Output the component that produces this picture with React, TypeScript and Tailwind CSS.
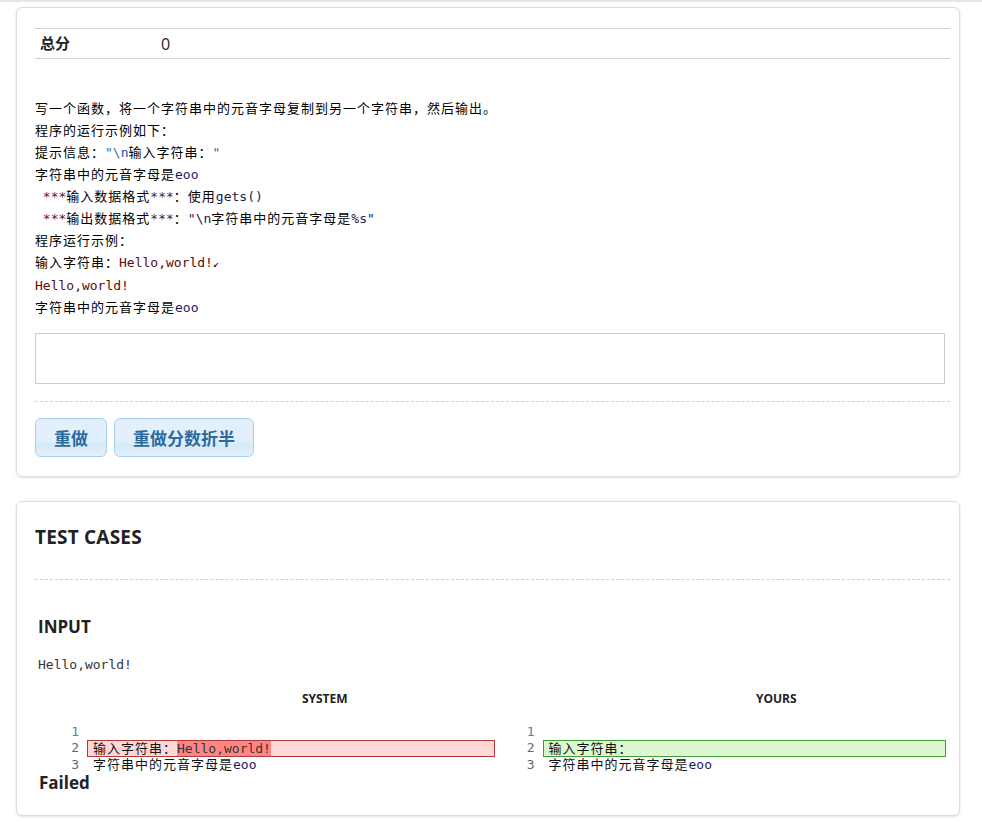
const CODE =
  "font-['DejaVu_Sans_Mono','Liberation_Mono','Noto_Sans_CJK_SC',monospace] text-[13px] tracking-[1px]";

function A({ c, children }: { c?: string; children: React.ReactNode }) {
  return (
    <span className={"tracking-normal " + (c ?? "")}>{children}</span>
  );
}

function DiffColumn({
  title,
  kind,
}: {
  title: string;
  kind: "system" | "yours";
}) {
  const isSys = kind === "system";
  return (
    <div className="flex flex-col">
      <div
        className={
          "text-center text-[12px] font-bold text-[#222] font-['Open_Sans',sans-serif] h-[20px] leading-[20px] " +
          (isSys ? "pl-[122px]" : "pl-[110px]")
        }
      >
        {title}
      </div>
      <div className={"mt-[15px] " + CODE}>
        {[1, 2, 3].map((n) => (
          <div key={n} className="flex">
            <div
              className={
                "text-right tracking-normal leading-[16px] " +
                (isSys ? "w-[44px] " : "w-[42px] ") +
                (n === 1 ? "text-[#5f7f9f]" : "text-[#666]")
              }
            >
              {n}
            </div>
            <div
              className={
                "ml-[8px] flex-1 text-[#111] " +
                (isSys ? "mr-[-2px] " : "mr-[4px] ") +
                (n === 2
                  ? isSys
                    ? "pl-[5px] h-[17px] leading-[15px] border border-[#b03a3a] bg-[#ffd7d7]"
                    : "pl-[5px] h-[17px] leading-[15px] border border-[#3a9f3a] bg-[#ddf8cf]"
                  : "pl-[6px] h-[16px] leading-[16px]")
              }
            >
              {n === 2 && (
                <>
                  输入字符串：
                  {isSys && (
                    <span className="tracking-normal bg-[#ff8585] text-[#333]">
                      Hello,world!
                    </span>
                  )}
                </>
              )}
              {n === 3 && (
                <>
                  字符串中的元音字母是<A c="text-[#1a1a5a]">eoo</A>
                </>
              )}
            </div>
          </div>
        ))}
      </div>
    </div>
  );
}

export default function App() {
  return (
    <div className="min-h-screen bg-white font-['Open_Sans','Noto_Sans_CJK_SC',sans-serif]">
      <div className="h-[2px] bg-[#e6e6e6]" />
      <div className="pl-[16px] pr-[22px] pt-[5px] pb-[12px] flex flex-col gap-[24px]">
        {/* question card */}
        <div className="rounded-[6px] border border-[#dcdcdc] shadow-[0_1px_3px_rgba(0,0,0,0.12)] pl-[18px] pr-[9px] pt-[20px] pb-[19px]">
          <div className="border-t border-b border-[#d0d0d0] h-[31px] flex items-center">
            <div className="w-[126px] pl-[5px] text-[15px] font-bold text-[#222] font-['Noto_Sans_CJK_SC',sans-serif]">
              总分
            </div>
            <div className="text-[16px] text-[#222]">0</div>
          </div>

          <div className={"mt-[39px] leading-[22px] text-black " + CODE}>
            <div>写一个函数，将一个字符串中的元音字母复制到另一个字符串，然后输出。</div>
            <div>程序的运行示例如下：</div>
            <div>
              提示信息：<A c="text-[#3a6aa8]">"\</A>
              <A c="text-[#1f4fb0]">n</A>输入字符串：<A c="text-[#3a6aa8]">"</A>
            </div>
            <div>
              字符串中的元音字母是<A c="text-[#1a1a5a]">eoo</A>
            </div>
            <div>
              <A>&nbsp;</A>
              <A c="text-[#5a2525]">***</A>输入数据格式<A c="text-[#5a2525]">***</A>：使用
              <A c="text-[#1a1a4a]">gets()</A>
            </div>
            <div>
              <A>&nbsp;</A>
              <A c="text-[#5a2525]">***</A>输出数据格式<A c="text-[#5a2525]">***</A>：
              <A c="text-[#1a1a4a]">"\n</A>字符串中的元音字母是<A c="text-[#1a1a4a]">%s"</A>
            </div>
            <div>程序运行示例：</div>
            <div>
              输入字符串：<A c="text-[#5a0a0a]">Hello,world!</A>
              <span className="text-[10px] tracking-normal">↙</span>
            </div>
            <div>
              <A c="text-[#5a0a0a]">Hello,world!</A>
            </div>
            <div>
              字符串中的元音字母是<A c="text-[#1a1a5a]">eoo</A>
            </div>
          </div>

          <textarea className="mt-[14px] block w-[910px] h-[51px] border border-[#cccccc] resize-none outline-none" />

          <div className="mt-[17px] border-t border-dashed border-[#cfcfcf]" />

          <div className="mt-[16px] flex gap-[7px]">
            {["重做", "重做分数折半"].map((t) => (
              <button
                key={t}
                type="button"
                className="h-[39px] px-[18px] rounded-[6px] border border-[#a9d0ee] bg-[linear-gradient(#e3f0fb,#e3f0fb_55%,#d5e9f8_70%,#e3f0fb)] text-[17px] font-bold text-[#2a6a9e] font-['Noto_Sans_CJK_SC',sans-serif]"
              >
                {t}
              </button>
            ))}
          </div>
        </div>

        {/* test cases card */}
        <div className="rounded-[6px] border border-[#dcdcdc] shadow-[0_1px_3px_rgba(0,0,0,0.12)] pl-[18px] pr-[9px] pt-[22px] pb-[21px]">
          <div className="text-[19px] font-bold text-[#222] leading-[26px] tracking-[0.2px]">
            TEST CASES
          </div>
          <div className="mt-[29px] border-t border-dashed border-[#cfcfcf]" />

          <div className="mt-[36px] pl-[3px] text-[17px] font-bold text-[#222] leading-[22px]">
            INPUT
          </div>
          <div className="mt-[18px] pl-[3px] font-['DejaVu_Sans_Mono',monospace] text-[13px] text-[#333] leading-[18px]">
            Hello,world!
          </div>

          <div className="mt-[15px] grid grid-cols-2">
            <DiffColumn title="SYSTEM" kind="system" />
            <DiffColumn title="YOURS" kind="yours" />
          </div>

          <div className="mt-[-1px] pl-[4px] text-[17px] font-bold text-[#222] leading-[22px]">
            Failed
          </div>
        </div>
      </div>
    </div>
  );
}
